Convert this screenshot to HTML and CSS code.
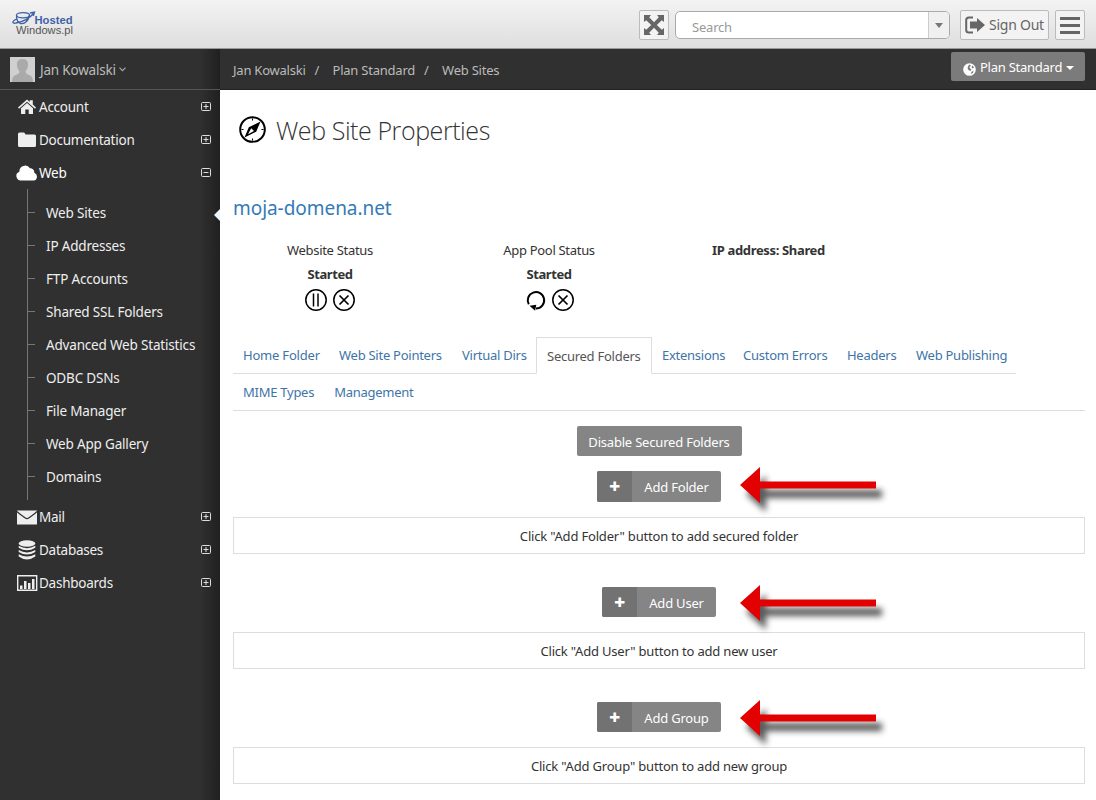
FILE: index.html
```
<!DOCTYPE html>
<html lang="en">
<head>
<meta charset="utf-8">
<title>Web Site Properties</title>
<link rel="stylesheet" href="styles.css">
</head>
<body>
<svg class="defs" width="0" height="0">
  <defs>
    <symbol id="plusbox" viewBox="0 0 10 10"><rect x=".5" y=".5" width="9" height="8" rx="1" fill="none" stroke="#ddd"/><path d="M2.500 4.500h5M5 2v5" stroke="#ddd"/></symbol>
    <symbol id="minusbox" viewBox="0 0 10 10"><rect x=".5" y=".5" width="9" height="8" rx="1" fill="none" stroke="#ddd"/><path d="M2.500 4.500h5" stroke="#ddd"/></symbol>
    <symbol id="stop" viewBox="0 0 22 22"><circle cx="11" cy="11" r="10.200" fill="none" stroke="#000" stroke-width="1.500"/><path d="M6.500 6.500l9 9M15.500 6.500l-9 9" stroke="#000" stroke-width="1.700"/></symbol>
    <symbol id="arrow" viewBox="0 0 160 60"><path class="arrow-shadow" d="M16 29L36 11v14h116v8H36v14z"/><path d="M10 20L30 2v14.500h116v7H30V38z" fill="#e30000"/></symbol>
  </defs>
</svg>
<header class="topbar">
  <svg class="logo" width="64" height="28" viewBox="0 0 64 28">
    <g fill="none" stroke="#3f61a6" stroke-width="1.300"><ellipse cx="11" cy="5.200" rx="6.500" ry="2.600"/><path d="M4.500 5.500c0 4 .5 7 4 8 3 .5 7-1 9-8M4.500 9C-1 12 .5 14 4 13c6-1 13-4 18-10M18 3l4.500-1-1.200 4"/></g>
    <text x="22.500" y="14" class="logo-a" textLength="38" lengthAdjust="spacingAndGlyphs">Hosted</text>
    <text x="4" y="24" class="logo-b" textLength="57" lengthAdjust="spacingAndGlyphs">Windows.pl</text>
  </svg>
  <div class="tools">
    <button class="tool square" aria-label="Full screen"><svg width="22" height="22" viewBox="0 0 22 22" fill="#666"><path d="M1 1h7L6.200 3.200 11 8.200l4.800-5L14 1h7v7l-2.200-1.800L13.800 11l5 4.800L21 14v7h-7l1.800-2.200L11 13.800l-4.800 5L8 21H1v-7l2.200 1.800 5-4.800-5-4.800L1 8z"/></svg></button>
    <div class="search"><span>Search</span><i><b></b></i></div>
    <button class="tool signout"><svg width="20" height="18" viewBox="0 0 20 18"><path d="M8 1.500H4Q1.200 1.500 1.200 4v10Q1.200 16.500 4 16.500h4" fill="none" stroke="#666" stroke-width="2"/><path d="M5 5.500h7V2l8 7-8 7v-3.500H5z" fill="#666"/></svg><span>Sign Out</span></button>
    <button class="tool square menu" aria-label="Menu"><i></i><i></i><i></i></button>
  </div>
</header>
<div class="shell">
  <aside class="sidebar">
    <div class="user">
      <svg width="25" height="25" viewBox="0 0 25 25"><path fill="#d0d0d0" d="M0 0h25v25H0z"/><path fill="#aaa" d="M12.500 2c4 0 6 2.500 5.500 6.500-.3 3-1.500 4.500-2.500 6 .3 3 3 3 5.500 4.500 1.500 1 2 3 2 6H2c0-3 .5-5 2-6 2.500-1.500 5-1.500 5.500-4.500-1-1.500-2.200-3-2.500-6C6.500 4.500 8.500 2 12.500 2z"/></svg>
      <span>Jan Kowalski</span>
      <svg class="chev" width="7" height="5" viewBox="0 0 7 5"><path d="M.5.700l3 3 3-3" fill="none" stroke="#aaa" stroke-width="1.200"/></svg>
    </div>
    <nav>
      <a class="item"><svg class="ic" width="22" height="18" viewBox="0 0 22 18" fill="#eee"><path d="M2 9.500L11 1.500l2.800 2.500V2.200h3v4.400L20 9.500l-1 1.200-8-7-8 7z"/><path d="M5 10.300l6-5.200 6 5.200V16h-4.300v-4.500H9.300V16H5z"/></svg><span>Account</span><svg class="box" width="10" height="10"><use href="#plusbox"/></svg></a>
      <a class="item"><svg class="ic" width="22" height="18" viewBox="0 0 22 18" fill="#eee"><path d="M2 3q0-1.500 1.500-1.500h4Q9 1.500 9.500 3.500h9q1.500 0 1.500 1.500v9.500q0 1.500-1.500 1.500h-15Q2 16 2 14.500z"/></svg><span>Documentation</span><svg class="box" width="10" height="10"><use href="#plusbox"/></svg></a>
      <a class="item active"><svg class="ic" width="22" height="18" viewBox="0 0 22 18" fill="#fff"><path d="M5.500 16.500A4.500 4.500 0 0 1 3.400 7.800 5.800 5.800 0 0 1 14 4.200a4.200 4.200 0 0 1 4.300 4.600 4 4 0 0 1-.6 7.700z"/></svg><span>Web</span><svg class="box" width="10" height="10"><use href="#minusbox"/></svg></a>
      <div class="sub">
        <a class="current">Web Sites</a><a>IP Addresses</a><a>FTP Accounts</a><a>Shared SSL Folders</a><a>Advanced Web Statistics</a><a>ODBC DSNs</a><a>File Manager</a><a>Web App Gallery</a><a>Domains</a>
      </div>
      <a class="item"><svg class="ic" width="22" height="18" viewBox="0 0 22 18" fill="#eee"><path d="M1 2.500h20v13.500q0 .5-.5.500h-19q-.5 0-.5-.5z"/><path d="M1 3.500c3 3 6 4.500 8 6.300q2 1.600 4 0c2-1.800 5-3.300 8-6.300" fill="none" stroke="#303030" stroke-width="1.200"/></svg><span>Mail</span><svg class="box" width="10" height="10"><use href="#plusbox"/></svg></a>
      <a class="item"><svg class="ic" width="22" height="20" viewBox="0 0 22 20" fill="#eee"><ellipse cx="11" cy="3.500" rx="8.300" ry="3.300"/><path d="M2.700 5.800q8.300 4.800 16.600 0v2q-8.300 5-16.600 0zM2.700 10q8.300 4.800 16.600 0v2q-8.300 5-16.600 0zM2.700 14.200q8.300 4.800 16.600 0V16.500q-8.300 6-16.600 0z"/></svg><span>Databases</span><svg class="box" width="10" height="10"><use href="#plusbox"/></svg></a>
      <a class="item"><svg class="ic" width="22" height="18" viewBox="0 0 22 18" fill="#eee"><path d="M1.700 1.700h19v14.600h-19z" fill="none" stroke="#eee" stroke-width="1.400"/><path d="M4 11.500h2.500V15H4zM8 7h2.500v8H8zM12 9h2.500v6H12zM16 5h2.500v10H16z"/></svg><span>Dashboards</span><svg class="box" width="10" height="10"><use href="#plusbox"/></svg></a>
    </nav>
  </aside>
  <main>
    <div class="crumbs">
      <div class="path"><span>Jan Kowalski</span><span class="sep">/</span><span>Plan Standard</span><span class="sep">/</span><span>Web Sites</span></div>
      <button class="plan"><svg width="13" height="13" viewBox="0 0 13 13"><circle cx="6.500" cy="6.500" r="6.300" fill="#fff"/><path d="M6 1.500l2 1-1.500 1.500.5 1.500 1.500 1-1 1.500-2-1-1-2zM9.500 2.500l1.500 2-1.500 1-1-1.500zM8.500 9l2-1.500-.5 2.500-2 1z" fill="#777"/></svg><span>Plan Standard</span><b></b></button>
    </div>
    <div class="content">
      <h1><svg width="28" height="28" viewBox="0 0 28 28"><circle cx="14.500" cy="13.500" r="12.300" fill="none" stroke="#000" stroke-width="2"/><path fill-rule="evenodd" d="M22.500 5.500l-4.300 10.200-11.700 5.800 4.300-10.200zM13.200 12.300l-3.200 5.900 6-3.200z"/><path d="M14.500 2.500v2M14.500 22.500v2M3.500 13.500h2M23.500 13.500h2" stroke="#000"/></svg><span>Web Site Properties</span></h1>
      <h2>moja-domena.net</h2>
      <section class="status">
        <div class="cell"><span>Website Status</span><strong>Started</strong><div class="acts"><svg width="22" height="22" viewBox="0 0 22 22"><circle cx="11" cy="11" r="10.200" fill="none" stroke="#000" stroke-width="1.500"/><path d="M8.500 4.500v13M13 4.500v13" stroke="#000" stroke-width="1.500"/></svg><svg width="22" height="22"><use href="#stop"/></svg></div></div>
        <div class="cell"><span>App Pool Status</span><strong>Started</strong><div class="acts"><svg width="22" height="22" viewBox="0 0 22 22"><path d="M4.800 15.300A8.200 8.200 0 1 1 12 19.500" fill="none" stroke="#000" stroke-width="2"/><path d="M5.500 16.800l6.800-1-1.200 6z"/></svg><svg width="22" height="22"><use href="#stop"/></svg></div></div>
        <div class="cell ip"><strong>IP address: Shared</strong></div>
      </section>
      <nav class="tabs">
        <div class="row first"><a>Home Folder</a><a>Web Site Pointers</a><a>Virtual Dirs</a><a class="on">Secured Folders</a><a>Extensions</a><a>Custom Errors</a><a>Headers</a><a>Web Publishing</a></div>
        <div class="row second"><a>MIME Types</a><a>Management</a></div>
      </nav>
      <button class="btn disable">Disable Secured Folders</button>
      <div class="action a1"><button class="btn add"><i>✚</i><span>Add Folder</span></button><svg class="arrow" width="160" height="60"><use href="#arrow"/></svg></div>
      <div class="empty">Click "Add Folder" button to add secured folder</div>
      <div class="action a2"><button class="btn add user-btn"><i>✚</i><span>Add User</span></button><svg class="arrow" width="160" height="60"><use href="#arrow"/></svg></div>
      <div class="empty">Click "Add User" button to add new user</div>
      <div class="action a3"><button class="btn add"><i>✚</i><span>Add Group</span></button><svg class="arrow" width="160" height="60"><use href="#arrow"/></svg></div>
      <div class="empty">Click "Add Group" button to add new group</div>
    </div>
  </main>
</div>
</body>
</html>
```
FILE: styles.css
```
* { box-sizing: border-box; }
body { margin: 0; height: 800px; overflow: hidden; display: flex; flex-direction: column; font: 13px/18px "Noto Sans", "Open Sans", sans-serif; color: #333; background: #fff; }
button { font: inherit; padding: 0; }
.defs { position: absolute; }
.topbar { height: 49px; flex: none; display: flex; justify-content: space-between; padding: 10px 11px 0 12px; background: linear-gradient(#f3f3f3, #dedede); border-bottom: 1px solid #999; }
.logo-a { font: bold 11.5px "Liberation Sans", sans-serif; fill: #3f61a6; }
.logo-b { font: 11px "Liberation Sans", sans-serif; fill: #555; }
.tools { display: flex; height: 30px; }
.tool { height: 30px; border: 1px solid #bbb; border-radius: 2px; background: #f3f3f3; color: #666; display: flex; align-items: center; }
.square { width: 30px; justify-content: center; }
.search { width: 275px; height: 28px; margin: 1px 10px 0 6px; border: 1px solid #aaa; border-radius: 5px; background: #fff; display: flex; justify-content: space-between; overflow: hidden; color: #999; }
.search span { padding: 6px 0 0 16px; letter-spacing: -.2px; }
.search i { width: 21px; background: #f0f0f0; border-left: 1px solid #ccc; display: flex; align-items: center; justify-content: center; }
.search b { border: 4px solid transparent; border-top: 5px solid #777; border-bottom: 0; }
.signout { width: 89px; padding-left: 4px; gap: 4px; font-size: 14px; }
.signout span { letter-spacing: -.25px; white-space: nowrap; }
.menu { margin-left: 6px; flex-direction: column; gap: 4px; }
.menu i { width: 20px; height: 3px; background: #666; }
.shell { flex: 1; min-height: 0; display: flex; }
.sidebar { width: 220px; flex: none; background: linear-gradient(90deg, #303030 200px, #202020 220px); color: #eee; }
.user { height: 41px; display: flex; align-items: center; padding-left: 10px; border-bottom: 1px solid #555; color: #bbb; font-size: 13.5px; letter-spacing: -.2px; }
.user span { margin: 1px 3px 0 5px; }
.item { height: 33px; display: flex; align-items: center; padding: 0 9px 0 16px; font-size: 13.5px; letter-spacing: -.25px; }
.item .ic { margin-right: 1px; }
.box { margin-left: auto; }
.active { color: #fff; }
.sub { margin: 0 0 0 27px; padding: 7px 0 6px; height: 311px; border-left: 1px solid #777; }
.sub a { height: 33px; display: flex; align-items: center; font-size: 13.5px; letter-spacing: -.18px; position: relative; white-space: nowrap; }
.sub a::before { content: ""; width: 7px; height: 1px; margin-right: 11px; background: #777; }
.sub .current::after { content: ""; position: absolute; right: 0; top: 13px; border: 6px solid transparent; border-left: 0; border-right-color: #eaf4ff; }
main { flex: 1; min-width: 0; }
.crumbs { height: 41px; background: #303030; border-bottom: 1px solid #222; display: flex; justify-content: space-between; padding: 3px 11px 0 13px; color: #bbb; }
.path { display: flex; align-items: center; height: 35px; letter-spacing: -.23px; white-space: nowrap; }
.sep { width: 27px; padding-left: 9px; }
.plan { width: 134px; height: 29px; border: 0; border-radius: 2px; background: #7b7b7b; color: #fff; display: flex; align-items: center; padding-left: 12px; letter-spacing: -.25px; white-space: nowrap; }
.plan svg { margin: 5px 4px 0 0; }
.plan span { margin-top: 1px; }
.plan b { margin: 3px 0 0 4px; border: 4px solid transparent; border-top-color: #fff; border-bottom: 0; }
.content { padding: 0 11px 0 13px; }
h1 { margin: 0; padding: 26px 0 0 5px; height: 106px; display: flex; gap: 10px; font: 300 25px/29px "Open Sans", "Noto Sans", sans-serif; letter-spacing: -.43px; color: #333; }
h2 { margin: 0; height: 45px; font-weight: 400; font-size: 19px; line-height: 24px; letter-spacing: -.05px; color: #337ab7; }
.status { display: flex; height: 96px; }
.cell { width: 194px; margin-right: 25px; display: flex; flex-direction: column; align-items: center; gap: 6px; letter-spacing: -.3px; }
.cell strong { letter-spacing: -.4px; }
.acts { display: flex; gap: 6px; }
.cell.ip { width: 195px; }
.cell.ip strong { letter-spacing: -.35px; }
.tabs { color: #3e74a8; }
.row { height: 37px; border-bottom: 1px solid #ddd; display: flex; }
.first { width: 783px; }
.row a { display: block; padding: 9px 0 0 10px; letter-spacing: -.26px; white-space: nowrap; }
.first a { flex: none; width: 96px; }
.first a:nth-child(1) { letter-spacing: -.2px; }
.first a:nth-child(2) { width: 123px; }
.first a:nth-child(3) { width: 84px; }
.first a:nth-child(5) { width: 81px; }
.first a:nth-child(6) { width: 104px; }
.first a:nth-child(7) { width: 69px; }
.first a:nth-child(8) { width: 110px; }
.second a { margin-right: 10px; }
.first a:nth-child(4) { width: 116px; height: 37px; padding-top: 9px; border: 1px solid #ddd; border-bottom-color: #fff; color: #555; }
.btn { display: flex; border: 0; border-radius: 2px; background: #858585; color: #fff; height: 30px; align-items: center; }
.disable { width: 165px; margin: 15px auto; justify-content: center; letter-spacing: -.2px; white-space: nowrap; padding-top: 1px; }
.action { position: relative; height: 46px; }
.a2, .a3 { height: 78px; padding-top: 33px; }
.add { width: 124px; margin: 0 auto; letter-spacing: -.2px; white-space: nowrap; }
.a1 .add { height: 31px; }
.user-btn { width: 114px; }
.add i { width: 35px; height: 100%; border-radius: 2px 0 0 2px; background: #727272; font: 13px/32px "DejaVu Sans", sans-serif; text-align: center; }
.add span { flex: 1; padding-top: 1px; }
.arrow { position: absolute; left: 497px; top: -6px; overflow: visible; }
.a2 .arrow { top: 29px; }
.a3 .arrow { top: 29px; }
.arrow-shadow { fill: #222; opacity: .75; filter: blur(3px); }
.empty { height: 37px; border: 1px solid #ddd; text-align: center; padding-top: 9px; letter-spacing: -.18px; }
```
